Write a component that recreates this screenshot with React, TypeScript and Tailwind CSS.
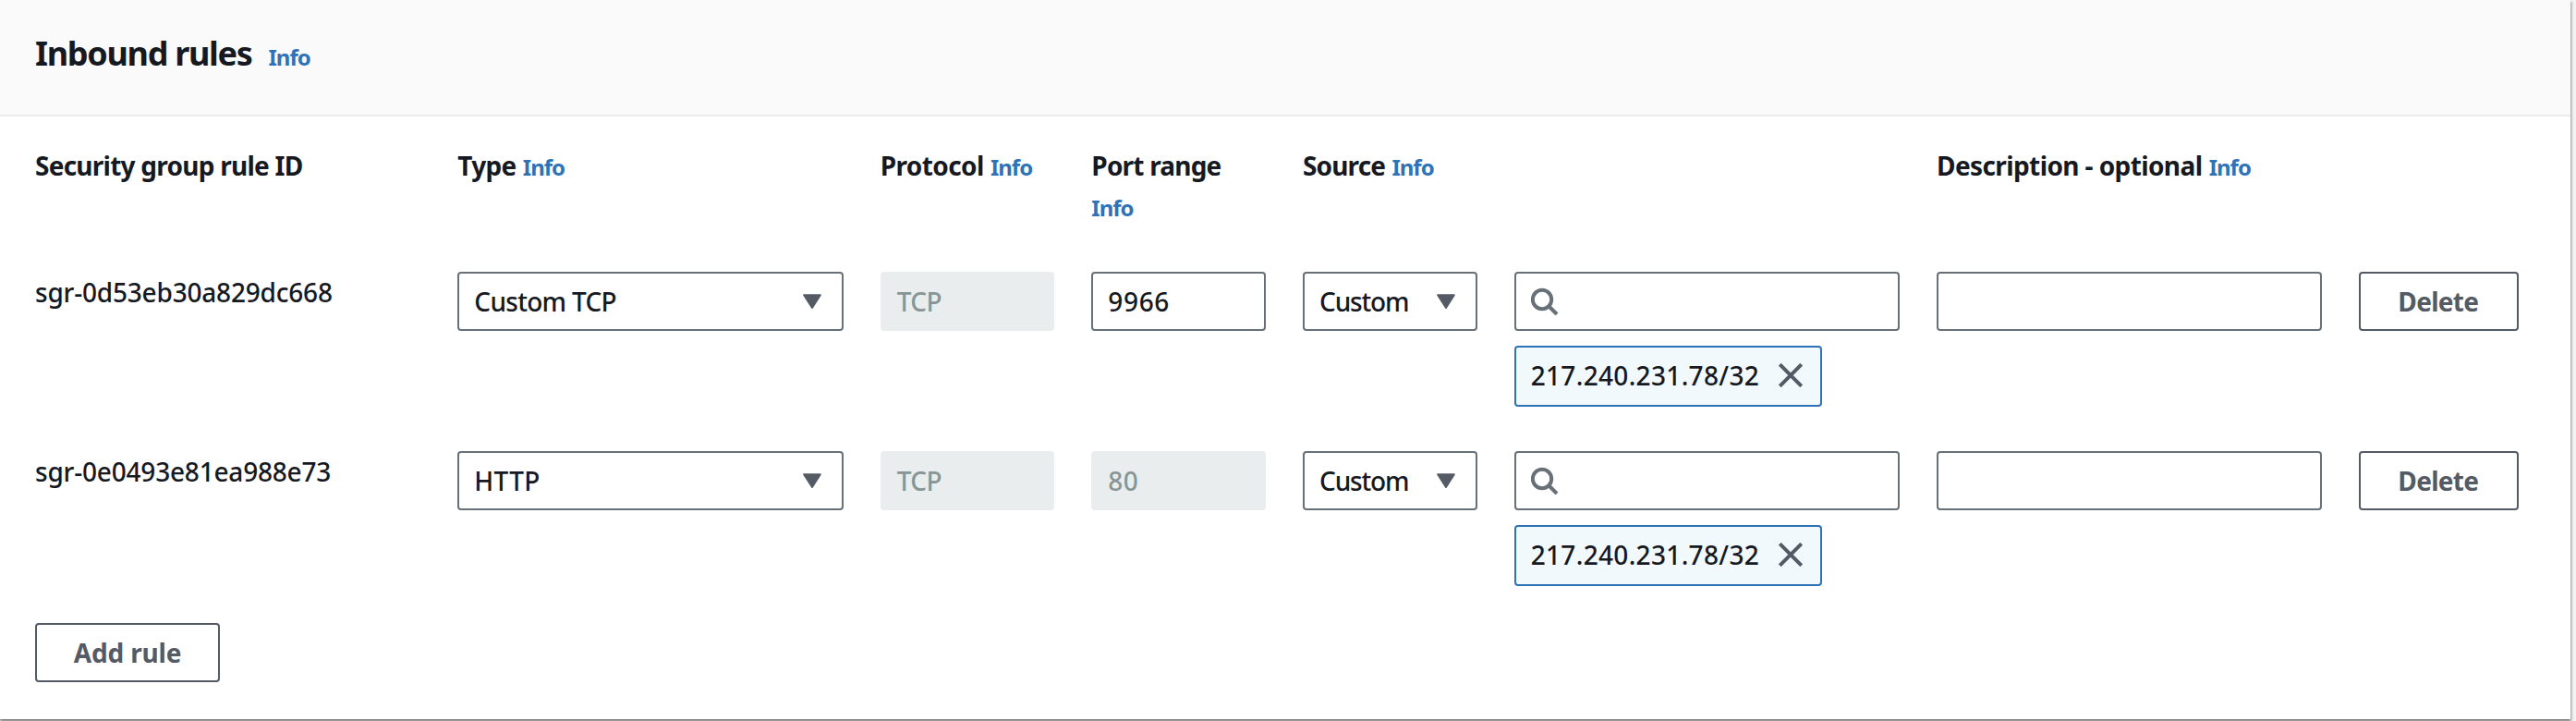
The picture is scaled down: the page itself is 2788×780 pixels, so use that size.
import React from "react";

type Rule = {
  id: string;
  type: string;
  typeSpacing: string;
  port: string;
  portLocked: boolean;
  cidr: string;
};

const rules: Rule[] = [
  { id: "sgr-0d53eb30a829dc668", type: "Custom TCP", typeSpacing: "tracking-[-0.7px]", port: "9966", portLocked: false, cidr: "217.240.231.78/32" },
  { id: "sgr-0e0493e81ea988e73", type: "HTTP", typeSpacing: "tracking-[0.35px]", port: "80", portLocked: true, cidr: "217.240.231.78/32" },
];

const box = "flex h-16 items-center rounded-[4px] border-2 border-[#687078] bg-white";

function Info() {
  return <a className="text-2xl/[44px] tracking-[-1px] text-[#2e73b8]">Info</a>;
}

function Caret() {
  return (
    <svg className="h-4 w-5 shrink-0" viewBox="0 0 20 16" fill="#545b64" stroke="#545b64" strokeWidth="2" strokeLinejoin="round">
      <path d="M1.2 1.2H18.8L10 15Z" />
    </svg>
  );
}

function SearchIcon() {
  return (
    <svg className="h-[30px] w-[30px]" viewBox="0 0 30 30" fill="none" stroke="#687078" strokeWidth="4">
      <circle cx="12" cy="13" r="10.2" />
      <path d="M19 20L28 29" />
    </svg>
  );
}

function CloseIcon() {
  return (
    <svg className="h-[26px] w-[26px]" viewBox="0 0 26 26" fill="none" stroke="#545b64" strokeWidth="4">
      <path d="M1.3 1.3L24.7 24.7M24.7 1.3L1.3 24.7" />
    </svg>
  );
}

function Button({ children, className }: { children: React.ReactNode; className: string }) {
  return (
    <button className={`flex h-16 items-center justify-center rounded-[4px] border-2 border-[#545b64] bg-white font-bold text-[#545b64] ${className}`}>
      {children}
    </button>
  );
}

function RuleRow({ rule }: { rule: Rule }) {
  return (
    <div className="grid h-[194px] w-[2704px] grid-cols-12 items-start gap-x-10">
      <div className="col-span-2 tracking-[-0.2px] whitespace-nowrap">{rule.id}</div>
      <div className={`${box} col-span-2 justify-between pr-[22px] pl-4`}>
        <span className={rule.typeSpacing}>{rule.type}</span>
        <Caret />
      </div>
      <div className="flex h-16 items-center rounded-[4px] bg-[#eaeded] pl-[18px] tracking-[-0.5px] text-[#879596]">TCP</div>
      {rule.portLocked ? (
        <div className="flex h-16 items-center rounded-[4px] bg-[#eaeded] pl-[18px] tracking-[0.5px] text-[#879596]">{rule.port}</div>
      ) : (
        <div className={`${box} pl-4 tracking-[0.65px]`}>{rule.port}</div>
      )}
      <div className={`${box} justify-between pr-[22px] pl-4`}>
        <span className="tracking-[-1.15px]">Custom</span>
        <Caret />
      </div>
      <div className="col-span-2 flex flex-col items-start gap-4">
        <div className={`${box} w-full pl-4`}>
          <SearchIcon />
        </div>
        <div className="flex h-[66px] w-[333px] items-center justify-between rounded-[4px] border-2 border-[#2e73b8] bg-[#f2f9fd] pr-[19px] pb-0.5 pl-4">
          <span className="tracking-[0.33px]">{rule.cidr}</span>
          <CloseIcon />
        </div>
      </div>
      <div className={`${box} col-span-2`} />
      <Button className="w-[173px] pr-0.5 tracking-[-0.7px]">Delete</Button>
    </div>
  );
}

export default function App() {
  return (
    <div className="h-[780px] w-[2788px] overflow-hidden bg-[#f2f3f3]">
      <section className="h-[778px] w-[2782px] bg-white font-['Noto_Sans',sans-serif] text-[28px]/[44px] font-medium text-[#16191f] shadow-[0_2px_2px_0_rgba(20,28,36,0.35),2px_2px_2px_0_rgba(20,28,36,0.2),-2px_2px_2px_0_rgba(20,28,36,0.15)]">
        <header className="flex h-[126px] items-baseline gap-[18px] border-b-2 border-[#ebebeb] bg-[#fafafa] pt-9 pl-[38px] font-bold">
          <h2 className="text-4xl/[44px] tracking-[-1.3px]">Inbound rules</h2>
          <Info />
        </header>
        <div className="pt-[31px] pl-[38px]">
          <div className="grid h-[137px] w-[2704px] grid-cols-12 items-start gap-x-10 font-bold">
            <div className="col-span-2 tracking-[-0.75px]">Security group rule ID</div>
            <div className="col-span-2"><span className="tracking-[-0.7px]">Type</span> <Info /></div>
            <div className="whitespace-nowrap"><span className="tracking-[-0.6px]">Protocol</span> <Info /></div>
            <div><span className="tracking-[-0.8px]">Port range</span> <Info /></div>
            <div className="col-span-3"><span className="tracking-[-0.85px]">Source</span> <Info /></div>
            <div className="col-span-3"><span className="tracking-[-0.6px]">Description - optional</span> <Info /></div>
          </div>
          {rules.map((rule) => (
            <RuleRow key={rule.id} rule={rule} />
          ))}
          <Button className="-mt-2 w-[200px] tracking-[-0.15px]">Add rule</Button>
        </div>
      </section>
    </div>
  );
}
